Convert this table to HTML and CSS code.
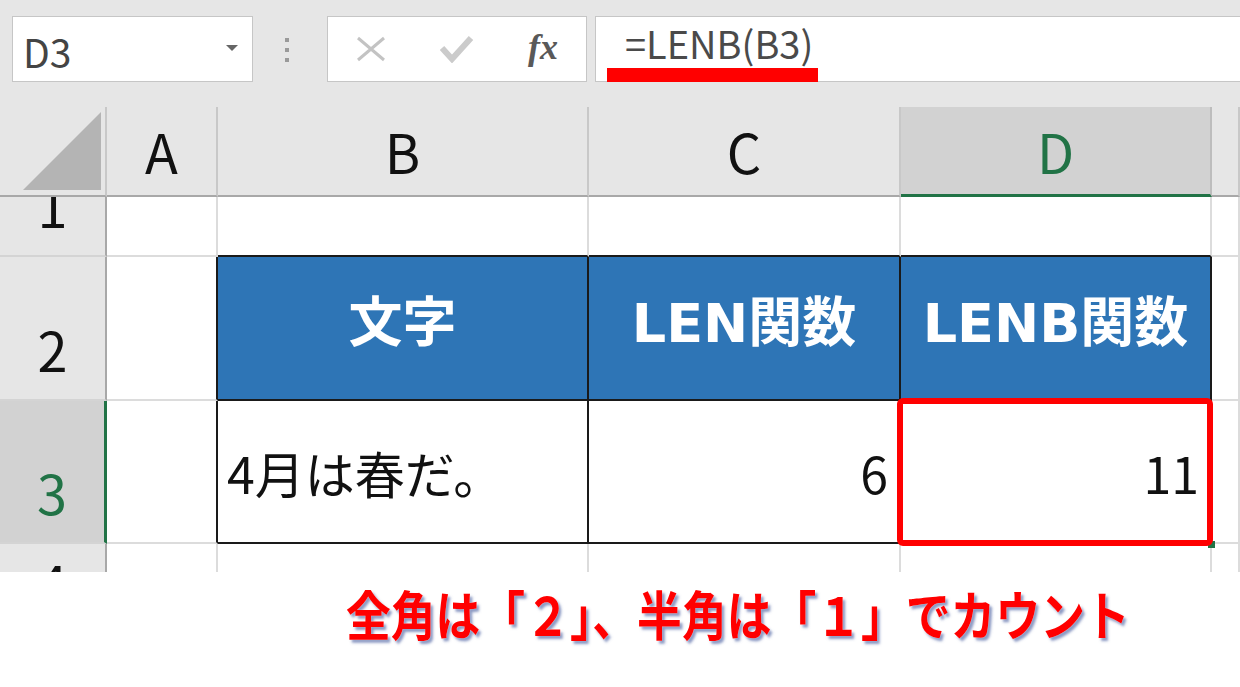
FILE: index.html
```html
<!DOCTYPE html>
<html lang="ja">
<head>
  <meta charset="UTF-8">
  <meta name="viewport" content="width=device-width, initial-scale=1.0">
  <title>LENB関数</title>

  <link rel="stylesheet" href="styles.css">

</head>
<body>

  <header class="toolbar">
    <div class="name-box">
      <span>D3</span>
      <span class="drop"></span>
    </div>
    <div class="grip"><i></i><i></i><i></i></div>
    <div class="fx-buttons">
      <span class="btn">
        <svg width="30" height="26" viewBox="0 0 30 26"><path d="M2 2 L28 24 M28 2 L2 24" stroke="#c3c3c3" stroke-width="3" fill="none"/></svg>
      </span>
      <span class="btn">
        <svg width="34" height="28" viewBox="0 0 34 28"><polyline points="2,13 12,24 31,3" stroke="#cbcbcb" stroke-width="6" fill="none"/></svg>
      </span>
      <span class="btn fx">fx</span>
    </div>
    <div class="formula"><span>=LENB(B3)</span></div>
  </header>

  <main class="sheet">
    <!-- column headers -->
    <div class="hd corner"><svg width="78" height="78" viewBox="0 0 78 78"><polygon points="0,78 78,0 78,78" fill="#b4b4b4"/></svg></div>
    <div class="hd">A</div>
    <div class="hd">B</div>
    <div class="hd">C</div>
    <div class="hd sel">D</div>
    <div class="hd"></div>

    <!-- row 1 -->
    <div class="rh">1</div>
    <div></div>
    <div class="top-edge"></div>
    <div class="top-edge"></div>
    <div class="top-edge"></div>
    <div></div>

    <!-- row 2 -->
    <div class="rh">2</div>
    <div class="left-edge"></div>
    <div class="th">文字</div>
    <div class="th">LEN関数</div>
    <div class="th">LENB関数</div>
    <div></div>

    <!-- row 3 -->
    <div class="rh sel">3</div>
    <div class="left-edge"></div>
    <div class="td">4月は春だ。</div>
    <div class="td num">6</div>
    <div class="td num mark">11</div>
    <div></div>

    <!-- row 4 -->
    <div class="rh">4</div>
    <div></div>
    <div></div>
    <div></div>
    <div></div>
    <div></div>
  </main>

  <p class="note"><span>全角は「２」、半角は「１」でカウント</span></p>

</body>
</html>
```

FILE: styles.css
```css
body {
  margin: 0;
  width: 1240px;
  height: 687px;
  overflow: hidden;
  background-color: #fff;
  font-family: "Noto Sans CJK JP", "Noto Sans", sans-serif;
  color: #111;
}

/* formula bar */
.toolbar {
  display: flex;
  align-items: flex-start;
  height: 107px;
  box-sizing: border-box;
  padding-top: 16px;
  background-color: #e6e6e6;
}

.name-box {
  display: flex;
  align-items: center;
  justify-content: space-between;
  width: 241px;
  height: 66px;
  box-sizing: border-box;
  margin-left: 12px;
  padding: 4px 14px 0 10px;
  border: 1px solid #c6c6c6;
  background-color: #fff;
  font-size: 39px;
  color: #444;
}

.drop {
  border-left: 6px solid transparent;
  border-right: 6px solid transparent;
  border-top: 6px solid #666;
  margin-bottom: 6px;
}

.grip {
  display: flex;
  flex-direction: column;
  align-items: center;
  gap: 6px;
  width: 74px;
  box-sizing: border-box;
  padding: 22px 6px 0 0;
}

.grip i {
  width: 4px;
  height: 4px;
  background-color: #9a9a9a;
}

.fx-buttons {
  display: flex;
  width: 260px;
  height: 66px;
  box-sizing: border-box;
  border: 1px solid #c6c6c6;
  background-color: #fff;
}

.btn {
  flex: 1;
  display: flex;
  align-items: center;
  justify-content: center;
}

.fx {
  font-family: "Liberation Serif", serif;
  font-style: italic;
  font-weight: bold;
  font-size: 36px;
  color: #595959;
  padding-bottom: 4px;
}

.formula {
  position: relative;
  flex: 1;
  display: flex;
  align-items: center;
  height: 66px;
  box-sizing: border-box;
  margin-left: 8px;
  padding: 0 0 14px 29px;
  border: 1px solid #c6c6c6;
  border-right: none;
  background-color: #fff;
  font-size: 38px;
  color: #4a4a4a;
}

/* red underline marker */
.formula::after {
  content: "";
  position: absolute;
  left: 11px;
  bottom: -1px;
  width: 211px;
  height: 14px;
  background-color: #ff0000;
}

/* grid */
.sheet {
  display: grid;
  grid-template-columns: 107px 111px 371px 312px 311px 28px;
  grid-template-rows: 90px 60px 144px 143px 91px;
  height: 465px;
  overflow: hidden;
}

.sheet > div {
  display: flex;
  align-items: center;
  box-sizing: border-box;
  border-right: 2px solid #dcdcdc;
  border-bottom: 2px solid #dcdcdc;
  line-height: 1;
}

.sheet > .hd {
  justify-content: center;
  background-color: #e6e6e6;
  border-right-color: #c8c8c8;
  border-bottom-color: #a8a8a8;
  font-size: 54px;
}

.sheet > .corner {
  justify-content: flex-end;
  align-items: flex-start;
  padding: 5px 4px 0 0;
}

.sheet > .hd.sel {
  background-color: #d2d2d2;
  border-right-color: #bdbdbd;
  border-bottom: 3px solid #217346;
  color: #217346;
}

.sheet > .rh {
  justify-content: center;
  align-items: flex-end;
  overflow: hidden;
  padding-bottom: 23px;
  background-color: #e6e6e6;
  border-right-color: #a8a8a8;
  border-bottom-color: #d4d4d4;
  font-size: 54px;
}

.sheet > .rh.sel {
  background-color: #d2d2d2;
  border-right: 3px solid #217346;
  color: #217346;
}

.sheet > .top-edge {
  border-bottom-color: #1a1a1a;
}

.sheet > .left-edge {
  border-right-color: #1a1a1a;
}

.sheet > .th,
.sheet > .td {
  border-right-color: #1a1a1a;
  border-bottom-color: #1a1a1a;
}

.th {
  justify-content: center;
  padding-bottom: 8px;
  background-color: #2e75b6;
  color: #fff;
  font-weight: bold;
  font-size: 54px;
}

.th:nth-child(n) {
  font-family: "DejaVu Sans", "Noto Sans CJK JP", sans-serif;
}

.td {
  padding-left: 9px;
  font-size: 50px;
  color: #111;
}

.sheet > .num {
  justify-content: flex-end;
  padding-right: 11px;
}

.mark {
  position: relative;
}

/* selection handle */
.mark::before {
  content: "";
  position: absolute;
  right: -5px;
  bottom: -6px;
  width: 7px;
  height: 7px;
  background-color: #217346;
}

/* red annotation box */
.mark::after {
  content: "";
  position: absolute;
  left: -4px;
  top: -3px;
  right: -3px;
  bottom: -4px;
  border: 6px solid #ff0000;
  border-radius: 6px;
}

/* caption */
.note {
  margin: 0;
  padding: 15px 0 0 346px;
  white-space: nowrap;
  line-height: 1;
}

.note span {
  display: inline-block;
  transform: scaleX(0.845);
  transform-origin: left;
  font-size: 53px;
  font-weight: bold;
  color: #ff0000;
  text-shadow: 0 0 1px #fff, 3px 3px 3px rgba(90, 110, 170, 0.7);
}
```
